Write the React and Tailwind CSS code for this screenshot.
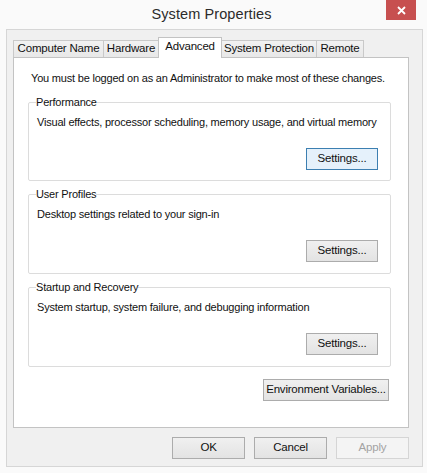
import React from 'react';

const tabs = [
  { label: 'Computer Name', w: 'w-[91px]' },
  { label: 'Hardware', w: 'w-[56px]' },
  { label: 'Advanced', w: 'w-[64px]', active: true },
  { label: 'System Protection', w: 'w-[96px]' },
  { label: 'Remote', w: 'w-[48px]' },
];

const groups = [
  { title: 'Performance', text: 'Visual effects, processor scheduling, memory usage, and virtual memory', focus: true, h: 'h-[87px]' },
  { title: 'User Profiles', text: 'Desktop settings related to your sign-in', h: 'h-[88px]' },
  { title: 'Startup and Recovery', text: 'System startup, system failure, and debugging information', h: 'h-[88px]' },
];

const Button = ({ children, w, focus = false, disabled = false }) => (
  <button
    className={`${w} h-[22px] flex items-center justify-center border text-[11.5px] tracking-[-0.2px] leading-none whitespace-nowrap ${
      focus
        ? 'border-[#3c7fb1] bg-[#e5f1fb] text-[#111]'
        : disabled
        ? 'border-[#d5d5d5] bg-[#f4f4f4] text-[#a3a3a3]'
        : 'border-[#acacac] bg-gradient-to-b from-[#f0f0f0] to-[#e3e3e3] text-[#111]'
    }`}
  >
    {children}
  </button>
);

const App = () => {
  return (
    <div className="w-[427px] h-[473px] bg-[#fafafa] relative font-['Liberation_Sans',Arial,sans-serif] text-[11px] tracking-[-0.2px] text-[#111] overflow-hidden">
      {/* title bar */}
      <div className="h-[29px] flex items-center justify-center pr-[4px]">
        <span className="text-[14.5px] text-[#2b2b2b] tracking-[0.1px]">System Properties</span>
      </div>
      <div className="absolute top-0 right-[11px] w-[30px] h-[20px] bg-[#c75050] flex items-center justify-center">
        <svg width="9" height="9" viewBox="0 0 9 9">
          <path d="M1 1L8 8M8 1L1 8" stroke="#fff" strokeWidth="1.8" />
        </svg>
      </div>

      {/* dialog frame */}
      <div className="ml-[6px] w-[417px] h-[438px] border border-[#d6d6d6] bg-[#f0f0f0] flex flex-col">
        {/* tabs */}
        <div className="flex items-end pl-[6px] pt-[7px] h-[27px]">
          {tabs.map((t) => (
            <div
              key={t.label}
              className={`${t.w} flex items-center justify-center -ml-px first:ml-0 border-t border-l border-r whitespace-nowrap text-[11.5px] ${
                t.active
                  ? 'h-[21px] bg-white border-[#c3c3c3] -mb-px z-10 pb-[3px]'
                  : 'h-[17px] bg-gradient-to-b from-[#f2f2f2] to-[#e8e8e8] border-[#c9c9c9]'
              }`}
            >
              {t.label}
            </div>
          ))}
        </div>

        {/* tab page */}
        <div className="ml-[6px] w-[396px] h-[371px] bg-white border border-[#c3c3c3] flex flex-col px-[14px]">
          <p className="pt-[12px] pl-[3px] leading-[16px] whitespace-nowrap">
            You must be logged on as an Administrator to make most of these changes.
          </p>
          <div className="mt-[8px] flex flex-col gap-[5px]">
            {groups.map((g) => (
              <fieldset
                key={g.title}
                className={`${g.h} w-[363px] min-w-0 border border-[#dcdcdc] rounded-[2px] px-[8px]`}
              >
                <legend className="leading-[16px] px-0 -ml-[1px]">{g.title}</legend>
                <p className="mt-[4px] leading-[16px] whitespace-nowrap">{g.text}</p>
                <div className="mt-[18px] flex justify-end pr-[4px]">
                  <Button w="w-[72px]" focus={g.focus}>Settings...</Button>
                </div>
              </fieldset>
            ))}
          </div>
          <div className="mt-[12px] flex justify-end pr-[5px]">
            <Button w="w-[126px]">Environment Variables...</Button>
          </div>
        </div>

        {/* dialog buttons */}
        <div className="mt-[9px] flex justify-end gap-[9px] pr-[13px]">
          <Button w="w-[73px]">OK</Button>
          <Button w="w-[73px]">Cancel</Button>
          <Button w="w-[73px]" disabled>Apply</Button>
        </div>
      </div>
    </div>
  );
};

export default App;
